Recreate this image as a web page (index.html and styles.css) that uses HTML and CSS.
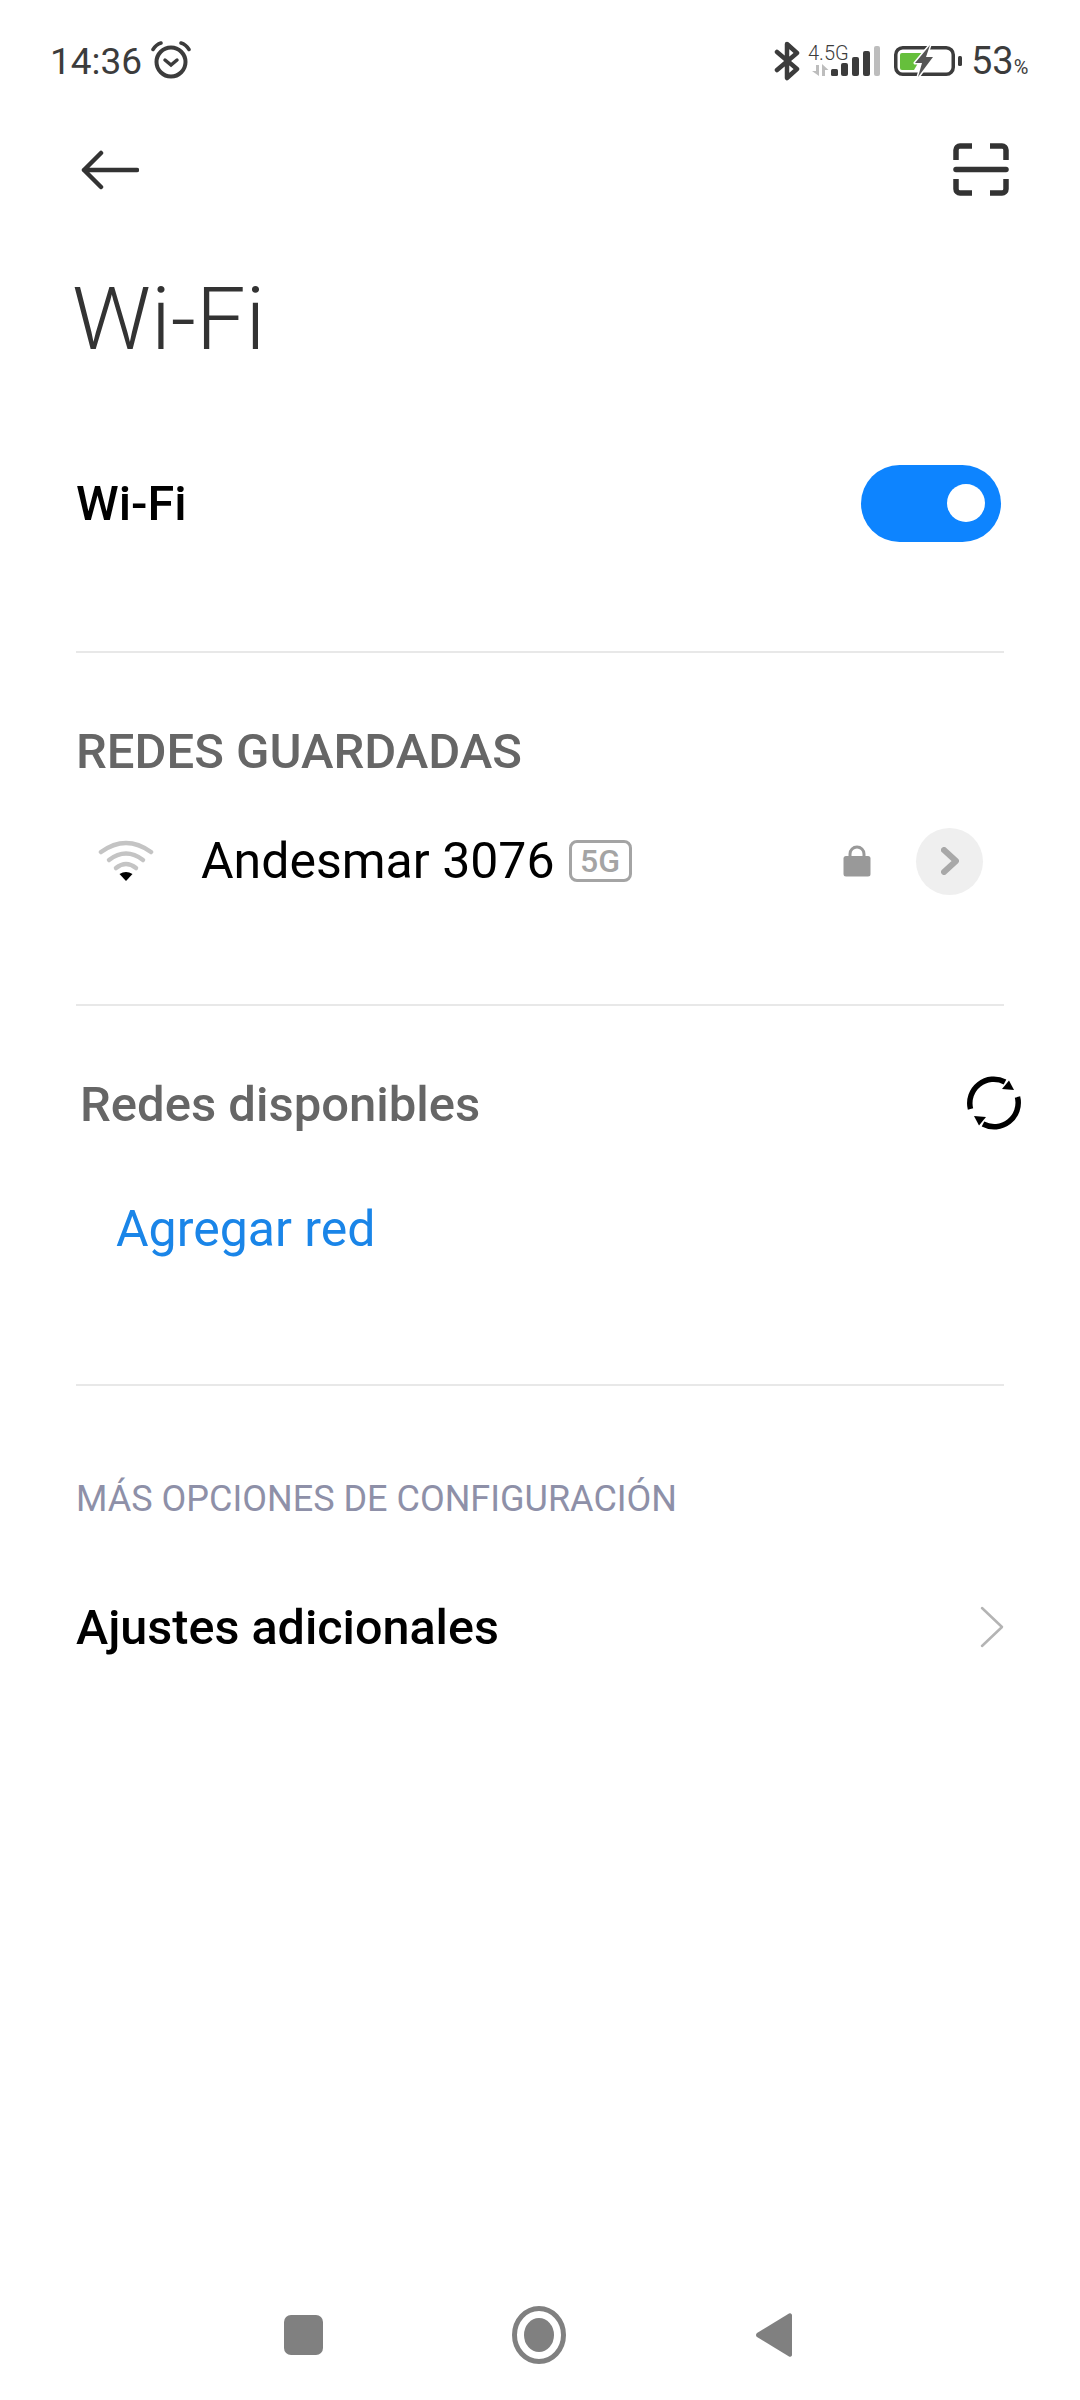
FILE: index.html

```html
<!DOCTYPE html>
<html lang="es">
<head>
  <meta charset="UTF-8" />
  <meta name="viewport" content="width=device-width, initial-scale=1.0"/>
  <title>Wi-Fi</title>
  <link rel="stylesheet" href="styles.css">
</head>
<body>
  <div class="status">
    <span class="time">14:36</span>
    <svg class="alarm" width="42" height="38" viewBox="0 0 42 38" fill="none" stroke="#3c3c3c" stroke-linecap="round">
      <circle cx="21" cy="21" r="14.5" stroke-width="4"/>
      <path d="M15 19l6 5 6-5" stroke-width="3.5"/>
      <path d="M3 8.5Q6 3.5 11 2M39 8.5Q36 3.5 31 2" stroke-width="3.5"/>
    </svg>
    <div class="status-right">
      <svg width="26" height="40" viewBox="0 0 26 40" fill="none" stroke="#3c3c3c" stroke-width="4.5" stroke-linejoin="round" stroke-linecap="round">
        <path d="M3 11L23 28 13 37V3l10 9L3 29"/>
      </svg>
      <div class="net-type">
        <span class="net-label">4.5G</span>
        <svg class="net-arrows" width="17" height="12" viewBox="0 0 17 12" fill="#bdbdbd">
          <path d="M0 7h4V1h3v11zM10 0l6.500 6H13v6h-3z"/>
        </svg>
      </div>
      <svg class="signal" width="50" height="32" viewBox="0 0 50 32">
        <rect x="0" y="24" width="7" height="7" rx="1.5" fill="#3c3c3c"/>
        <rect x="10" y="18" width="7" height="13" rx="2" fill="#3c3c3c"/>
        <rect x="21" y="12" width="7" height="19" rx="2" fill="#3c3c3c"/>
        <rect x="32" y="6" width="7" height="25" rx="2" fill="#3c3c3c"/>
        <rect x="43" y="1" width="6" height="30" rx="2" fill="#bdbdbd"/>
      </svg>
      <svg class="battery" width="70" height="34" viewBox="0 0 70 34" fill="none">
        <rect x="2.750" y="3.750" width="57.500" height="26.500" rx="7" stroke="#3c3c3c" stroke-width="3.500"/>
        <path d="M7 11a2 2 0 0 1 2-2h22l-10 17H9a2 2 0 0 1-2-2z" fill="#66bf3c"/>
        <path d="M37 1L22 19h7l-4 14 15-20h-7l4-12z" fill="#555" stroke="#fff" stroke-width="3" stroke-linejoin="round" paint-order="stroke"/>
        <rect x="65" y="12" width="4" height="10" rx="1.500" fill="#3c3c3c"/>
      </svg>
      <span class="batt-pct">53<small>%</small></span>
    </div>
  </div>

  <div class="toolbar">
    <svg width="58" height="40" viewBox="0 0 58 40" fill="none" stroke="#333" stroke-width="4.5" stroke-linecap="round" stroke-linejoin="round">
      <path d="M56 20H3M20 3L3 20l17 17"/>
    </svg>
    <svg width="56" height="54" viewBox="0 0 56 54" fill="none" stroke="#333" stroke-width="5.500">
      <path d="M19 3H7a4 4 0 0 0-4 4v10M37 3h12a4 4 0 0 1 4 4v10M19 50H7a4 4 0 0 1-4-4V36M37 50h12a4 4 0 0 0 4-4V36"/>
      <path d="M3 26.500h50" stroke-linecap="round"/>
    </svg>
  </div>

  <h1 class="title">Wi-Fi</h1>

  <div class="row main-row">
    <span class="strong">Wi-Fi</span>
    <div class="toggle"><div class="knob"></div></div>
  </div>
  <div class="divider first"></div>

  <div class="section-label saved">REDES GUARDADAS</div>
  <div class="net-row">
    <svg class="wifi" width="56" height="44" viewBox="0 0 56 44" fill="none" stroke="#c4c4c4" stroke-width="4.500" stroke-linecap="round">
      <path d="M3 13Q28-5 53 13"/>
      <path d="M11 21Q28 8 45 21"/>
      <path d="M18 29Q28 21 38 29"/>
      <path d="M21.500 35Q28 31 34.500 35L28 42z" fill="#000" stroke="none"/>
    </svg>
    <span class="net-name">Andesmar 3076</span>
    <span class="badge">5G</span>
    <svg class="lock" width="28" height="32" viewBox="0 0 28 32" fill="none">
      <path d="M7 14V9a7 7 0 0 1 14 0v5" stroke="#999" stroke-width="3"/>
      <rect x="0.500" y="11" width="27" height="20.500" rx="2.500" fill="#999"/>
    </svg>
    <div class="detail">
      <svg width="18" height="28" viewBox="0 0 18 28" fill="none" stroke="#a8a8a8" stroke-width="6" stroke-linecap="round" stroke-linejoin="round">
        <path d="M3 3l12 11L3 25"/>
      </svg>
    </div>
  </div>
  <div class="divider second"></div>

  <div class="row avail-row">
    <span class="section-label">Redes disponibles</span>
    <svg class="refresh" width="54" height="54" viewBox="0 0 54 54" fill="none" stroke="#000" stroke-width="5.500">
      <path d="M3.500 33A24 24 0 0 1 38 6"/>
      <path d="M50.500 21A24 24 0 0 1 16 48"/>
      <path d="M42 4.500l5 9.500-12-1z" fill="#000" stroke="none"/>
      <path d="M12 49.500l-5-9.500 12 1z" fill="#000" stroke="none"/>
    </svg>
  </div>
  <div class="add-net">Agregar red</div>
  <div class="divider third"></div>

  <div class="more-label">MÁS OPCIONES DE CONFIGURACIÓN</div>
  <div class="row extra-row">
    <span class="strong">Ajustes adicionales</span>
    <svg width="24" height="42" viewBox="0 0 24 42" fill="none" stroke="#b4b4b4" stroke-width="2.500" stroke-linecap="round" stroke-linejoin="round">
      <path d="M2 2l20 19L2 40"/>
    </svg>
  </div>

  <div class="navbar">
    <div class="nav-square"></div>
    <svg width="54" height="58" viewBox="0 0 54 58">
      <ellipse cx="27" cy="29" rx="24.500" ry="26.500" fill="none" stroke="#808080" stroke-width="5"/>
      <ellipse cx="27" cy="29" rx="15" ry="17" fill="#808080"/>
    </svg>
    <svg width="38" height="48" viewBox="0 0 38 48">
      <path d="M34 2.500a2 2 0 0 1 3 1.500v40a2 2 0 0 1-3 1.500L2 26a2.500 2.500 0 0 1 0-4z" fill="#808080"/>
    </svg>
  </div>
</body>
</html>
```

FILE: styles.css

```css
* {
  box-sizing: border-box;
}
body {
  margin: 0;
  width: 1080px;
  height: 2400px;
  display: flex;
  flex-direction: column;
  background: #fff;
  font-family: Roboto, sans-serif;
  color: #000;
}
svg {
  display: block;
  flex: none;
}

/* status bar */
.status {
  height: 120px;
  padding: 2px 51px 0 50px;
  display: flex;
  align-items: center;
  color: #3c3c3c;
}
.time {
  font-size: 37px;
  width: 100px;
}
.alarm {
  margin-top: -2px;
}
.status-right {
  margin-left: auto;
  display: flex;
  align-items: center;
}
.net-type {
  width: 27px;
  margin-left: 8px;
  height: 36px;
  display: flex;
  flex-direction: column;
}
.net-label {
  font-size: 20px;
  line-height: 20px;
  font-weight: 300;
  white-space: nowrap;
}
.net-arrows {
  margin: 1px 0 0 4px;
}
.signal {
  margin-left: -4px;
}
.battery {
  margin-left: 12px;
}
.batt-pct {
  font-size: 38px;
  margin-left: 8px;
  width: 58px;
}
.batt-pct small {
  font-size: 20px;
}

.toolbar {
  height: 100px;
  padding: 0 71px 0 81px;
  display: flex;
  align-items: center;
  justify-content: space-between;
}
.title {
  height: 198px;
  line-height: 198px;
  margin: 0;
  padding-left: 72px;
  font-size: 88px;
  font-weight: 300;
  color: #333;
}

/* rows */
.row {
  display: flex;
  align-items: center;
  justify-content: space-between;
}
.strong {
  font-size: 48.500px;
  font-weight: 500;
}
.main-row {
  height: 170px;
  padding: 0 79px 0 76px;
}
.toggle {
  width: 140px;
  height: 77px;
  border-radius: 39px;
  background: #0d84ff;
  display: flex;
  align-items: center;
  justify-content: flex-end;
  padding-right: 16px;
}
.knob {
  width: 38px;
  height: 38px;
  border-radius: 50%;
  background: #fff;
}
.divider {
  height: 2px;
  margin: 0 76px;
  background: #e8e8e8;
}
.divider.first {
  margin-top: 63px;
}
.divider.second {
  margin-top: 93px;
}
.divider.third {
  margin-top: 125px;
}
.section-label {
  font-size: 49px;
  font-weight: 500;
  color: #666;
  line-height: 60px;
}
.saved {
  margin: 69px 76px 0;
}

/* saved network */
.net-row {
  height: 100px;
  margin-top: 29px;
  padding: 0 97px 0 98px;
  display: flex;
  align-items: center;
}
.wifi {
  margin-right: 47px;
}
.net-name {
  font-size: 50px;
}
.badge {
  width: 63px;
  height: 42px;
  margin-left: 14px;
  border: 3px solid #a4a4a4;
  border-radius: 8px;
  color: #a4a4a4;
  font-size: 32px;
  font-weight: 500;
  line-height: 36px;
  text-align: center;
}
.lock {
  margin-left: auto;
}
.detail {
  width: 67px;
  height: 67px;
  margin-left: 45px;
  border-radius: 50%;
  background: #efefef;
  display: flex;
  align-items: center;
  justify-content: center;
}

.avail-row {
  height: 60px;
  margin-top: 69px;
  padding: 0 59px 0 80px;
}
.refresh {
  margin-top: -4px;
}
.add-net {
  margin-top: 64px;
  padding-left: 116px;
  font-size: 50px;
  line-height: 60px;
  color: #1a85e8;
}
.more-label {
  margin-top: 88px;
  padding-left: 76px;
  font-size: 36px;
  line-height: 50px;
  color: #8e90a8;
}
.extra-row {
  height: 60px;
  margin-top: 73px;
  padding: 0 76px;
}

/* bottom navigation */
.navbar {
  margin-top: auto;
  height: 130px;
  padding-left: 284px;
  display: flex;
  align-items: center;
  gap: 189px;
}
.nav-square {
  width: 39px;
  height: 40px;
  border-radius: 7px;
  background: #808080;
}
```
